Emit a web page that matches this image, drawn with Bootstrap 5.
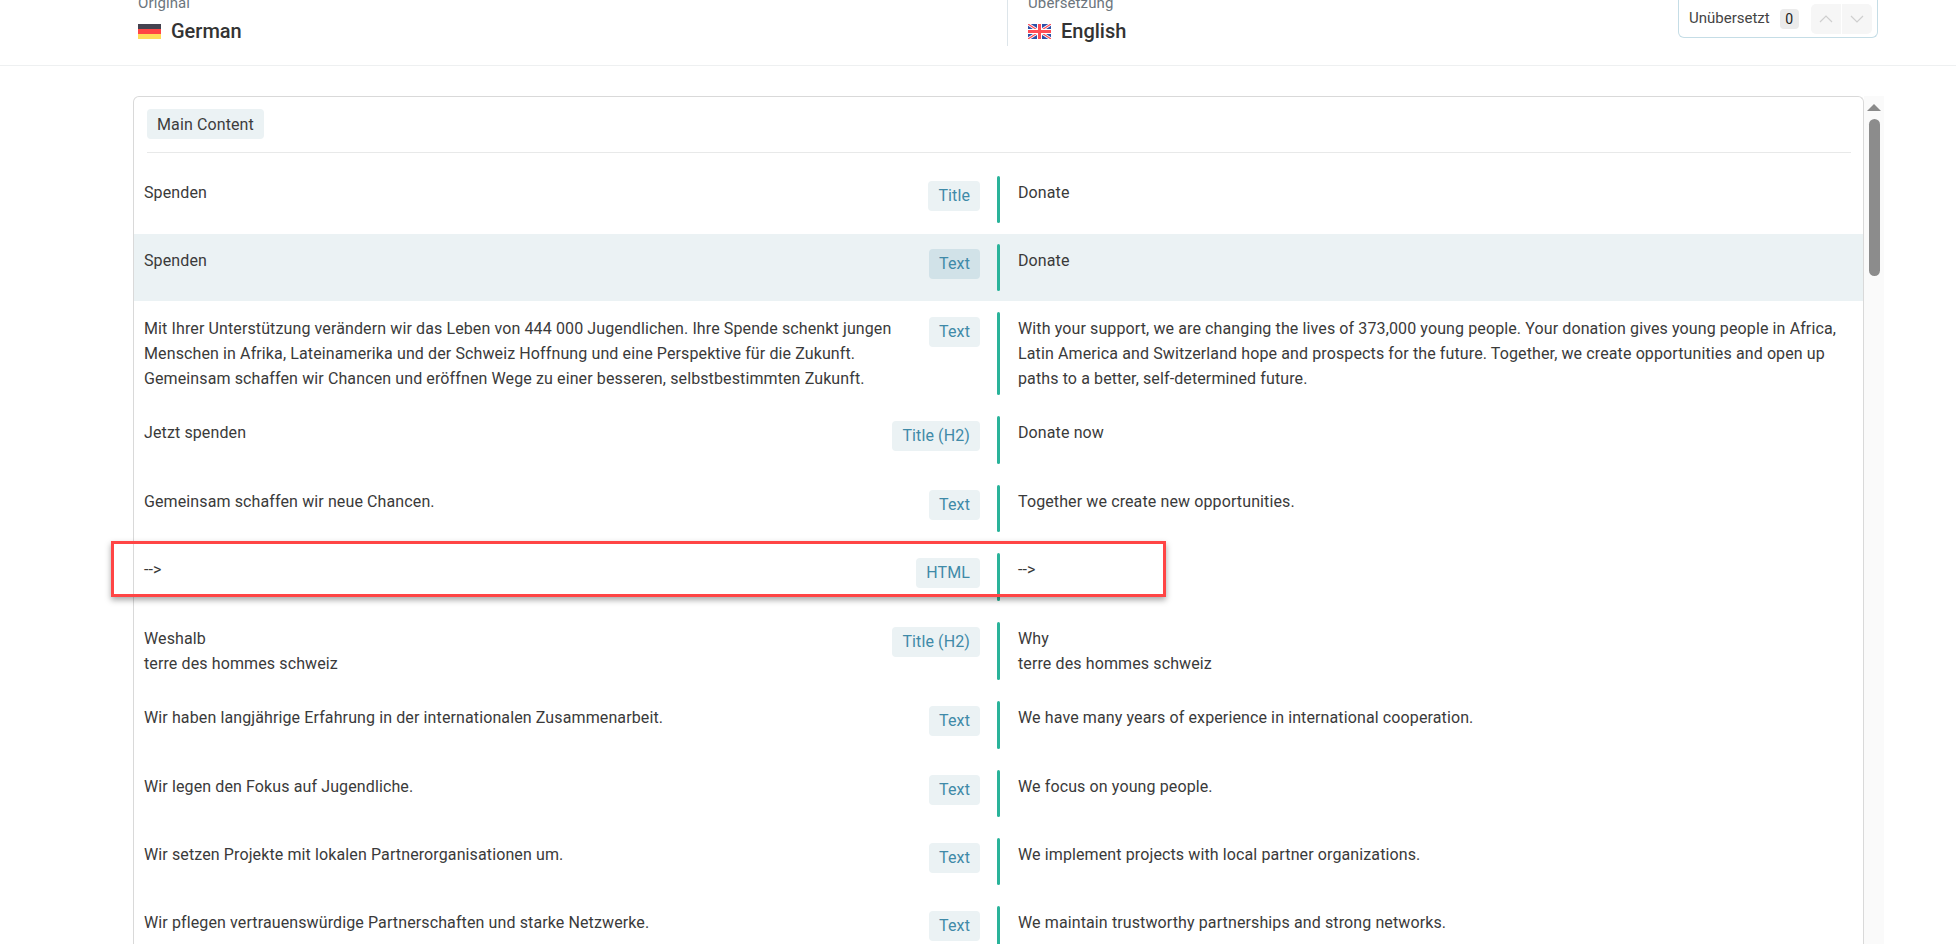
<!DOCTYPE html>
<html lang="en"><head><meta charset="utf-8"><title>Translation editor</title>
<link href="https://cdn.jsdelivr.net/npm/bootstrap@5.3.0/dist/css/bootstrap.min.css" rel="stylesheet">
<style>
html,body{height:944px;overflow:hidden;background:#fff}
body{font-family:Roboto,"Liberation Sans",sans-serif;font-size:16px;color:#3a3a3a;position:relative;letter-spacing:.115px}
.topbar{height:66px;border-bottom:1px solid #eef0f1;padding-left:138px;overflow:hidden}
.lang-col{margin-top:-7px;height:53px}
.lang-col.first{width:869px}
.lang-col.second{border-left:1px solid #dde5ea;padding-left:20px;width:671px;}
.lang-label{font-size:15px;line-height:20px;color:#6c757d}
.lang-name{font-size:20px;font-weight:500;line-height:28px;color:#333;margin-top:4px;gap:10px;letter-spacing:0}
.flagbox{width:23px;height:15px;display:block}
.statusbox{width:200px;height:38px;border:1px solid #c5dde6;border-top:0;border-radius:0 0 6px 6px;padding:0 5px 0 10px;font-size:15px;color:#444;letter-spacing:0}
.countchip{width:19px;height:20px;background:#ebebeb;border-radius:4px;font-size:14px;color:#222;margin-left:10px;line-height:20px;text-align:center}
.arrowgroup{margin-left:12px;height:30px;width:61px;border-radius:5px;overflow:hidden;gap:1px}
.arrowbtn{flex:1;background:#f6f6f6}
.mainarea{padding:30px 0 0 133px;height:878px;overflow:hidden}
.outerbox{width:1731px;border:1px solid #d9d9d9;border-bottom:0;border-radius:6px 6px 0 0;flex:none}
.sectionhead{margin:12px 12px 0 13px;padding-bottom:13px;border-bottom:1px solid #e8e9e9}
.sectionchip{display:inline-block;background:#ebf2f4;border-radius:4px;height:30px;line-height:31px;padding:0 10px;font-size:16px;color:#3d3d3d;vertical-align:top}
.rowlist{padding-top:12.6px}
.transrow{padding:10px 0 10px 10px;margin-bottom:1px}
.transrow.active{background:#ebf2f4}
.transrow.tworow{padding-bottom:10.6px}
.srcpart{width:836px;flex:none}
.srctext{padding:4px 0;line-height:25px;width:760px}
.typechip{background:#ebf2f4;color:#3f8aa8;border-radius:4px;height:30px;line-height:30px;padding:0 10px;font-size:16px;margin-top:5px;white-space:nowrap}
.active .typechip{background:#d1e2e8}
.greenbar{width:3px;min-height:47.4px;background:#2ab39a;border-radius:2px;margin:0 17px;flex:none}
.transtext{padding:4px 20px 4px 1px;line-height:25px;flex:1}
.scrolltrack{width:20px;background:#fafafa;flex:none;height:848px;position:relative;padding-top:8px}
.scrollup{width:0;height:0;border-left:7px solid transparent;border-right:7px solid transparent;border-bottom:7px solid #8a8a8a;margin:0 auto}
.scrollthumb{width:11px;height:157px;background:#8c8c8c;border-radius:6px;margin:8px auto 0}
.redmark{position:absolute;left:111px;top:541px;width:1055px;height:56px;border:3px solid #ff4545;box-shadow:0 3px 6px rgba(0,0,0,.35)}
</style></head><body>
<div class="topbar d-flex">
  <div class="lang-col first">
    <div class="lang-label">Original</div>
    <div class="lang-name d-flex align-items-center"><svg class="flagbox" viewBox="0 0 23 15"><rect width="23" height="5" fill="#44424f"/><rect y="5" width="23" height="5" fill="#ff4545"/><rect y="10" width="23" height="5" fill="#ffdc5a"/></svg><span>German</span></div>
  </div>
  <div class="lang-col second">
    <div class="lang-label">Übersetzung</div>
    <div class="lang-name d-flex align-items-center"><svg class="flagbox" viewBox="0 0 23 15"><rect width="23" height="15" fill="#2d4fa8"/><path d="M0 0L23 15M23 0L0 15" stroke="#fff" stroke-width="3"/><path d="M0 0L23 15M23 0L0 15" stroke="#ff4b55" stroke-width="1.2"/><path d="M11.5 0V15M0 7.5H23" stroke="#fff" stroke-width="5"/><path d="M11.5 0V15M0 7.5H23" stroke="#ff4b55" stroke-width="3"/></svg><span>English</span></div>
  </div>
  <div class="statusbox d-flex align-items-center">
    <span>Unübersetzt</span><span class="countchip">0</span>
    <div class="arrowgroup d-flex">
      <div class="arrowbtn d-flex align-items-center justify-content-center"><svg width="14" height="8" viewBox="0 0 14 8" fill="none" stroke="#cfcfcf" stroke-width="1.2"><path d="M1 7L7 1L13 7"/></svg></div>
      <div class="arrowbtn d-flex align-items-center justify-content-center"><svg width="14" height="8" viewBox="0 0 14 8" fill="none" stroke="#cfcfcf" stroke-width="1.2"><path d="M1 1L7 7L13 1"/></svg></div>
    </div>
  </div>
</div>
<div class="mainarea d-flex">
  <div class="outerbox">
    <div class="sectionhead"><span class="sectionchip">Main Content</span></div>
    <div class="rowlist">
      <div class="transrow d-flex"><div class="srcpart d-flex justify-content-between"><div class="srctext">Spenden</div><div class="typechip">Title</div></div><div class="greenbar"></div><div class="transtext">Donate</div></div>
      <div class="transrow active d-flex"><div class="srcpart d-flex justify-content-between"><div class="srctext">Spenden</div><div class="typechip">Text</div></div><div class="greenbar"></div><div class="transtext">Donate</div></div>
      <div class="transrow d-flex"><div class="srcpart d-flex justify-content-between"><div class="srctext">Mit Ihrer Unterstützung verändern wir das Leben von 444 000 Jugendlichen. Ihre Spende schenkt jungen Menschen in Afrika, Lateinamerika und der Schweiz Hoffnung und eine Perspektive für die Zukunft. Gemeinsam schaffen wir Chancen und eröffnen Wege zu einer besseren, selbstbestimmten Zukunft.</div><div class="typechip">Text</div></div><div class="greenbar"></div><div class="transtext">With your support, we are changing the lives of 373,000 young people. Your donation gives young people in Africa, Latin America and Switzerland hope and prospects for the future. Together, we create opportunities and open up paths to a better, self-determined future.</div></div>
      <div class="transrow d-flex"><div class="srcpart d-flex justify-content-between"><div class="srctext">Jetzt spenden</div><div class="typechip">Title (H2)</div></div><div class="greenbar"></div><div class="transtext">Donate now</div></div>
      <div class="transrow d-flex"><div class="srcpart d-flex justify-content-between"><div class="srctext">Gemeinsam schaffen wir neue Chancen.</div><div class="typechip">Text</div></div><div class="greenbar"></div><div class="transtext">Together we create new opportunities.</div></div>
      <div class="transrow d-flex"><div class="srcpart d-flex justify-content-between"><div class="srctext">--&gt;</div><div class="typechip">HTML</div></div><div class="greenbar"></div><div class="transtext">--&gt;</div></div>
      <div class="transrow tworow d-flex"><div class="srcpart d-flex justify-content-between"><div class="srctext">Weshalb<br>terre des hommes schweiz</div><div class="typechip">Title (H2)</div></div><div class="greenbar"></div><div class="transtext">Why<br>terre des hommes schweiz</div></div>
      <div class="transrow d-flex"><div class="srcpart d-flex justify-content-between"><div class="srctext">Wir haben langjährige Erfahrung in der internationalen Zusammenarbeit.</div><div class="typechip">Text</div></div><div class="greenbar"></div><div class="transtext">We have many years of experience in international cooperation.</div></div>
      <div class="transrow d-flex"><div class="srcpart d-flex justify-content-between"><div class="srctext">Wir legen den Fokus auf Jugendliche.</div><div class="typechip">Text</div></div><div class="greenbar"></div><div class="transtext">We focus on young people.</div></div>
      <div class="transrow d-flex"><div class="srcpart d-flex justify-content-between"><div class="srctext">Wir setzen Projekte mit lokalen Partnerorganisationen um.</div><div class="typechip">Text</div></div><div class="greenbar"></div><div class="transtext">We implement projects with local partner organizations.</div></div>
      <div class="transrow d-flex"><div class="srcpart d-flex justify-content-between"><div class="srctext">Wir pflegen vertrauenswürdige Partnerschaften und starke Netzwerke.</div><div class="typechip">Text</div></div><div class="greenbar"></div><div class="transtext">We maintain trustworthy partnerships and strong networks.</div></div>
    </div>
  </div>
  <div class="scrolltrack"><div class="scrollup"></div><div class="scrollthumb"></div></div>
</div>
<div class="redmark"></div>
<script src="https://cdn.jsdelivr.net/npm/bootstrap@5.3.0/dist/js/bootstrap.bundle.min.js"></script>
</body></html>
